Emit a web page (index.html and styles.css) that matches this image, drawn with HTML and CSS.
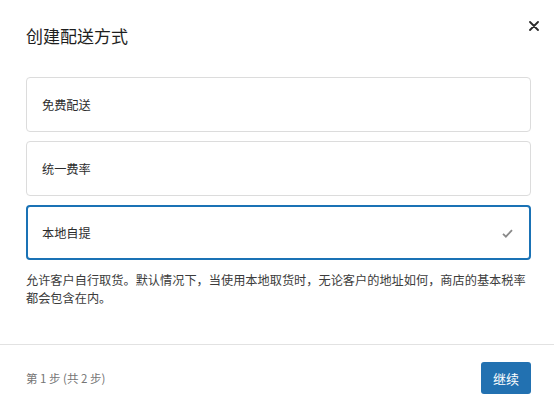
FILE: index.html
```html
<!DOCTYPE html>
<html lang="zh-CN">
<head>
<meta charset="utf-8">
<title>创建配送方式</title>
<link rel="stylesheet" href="styles.css">
</head>
<body>
<div class="modal">
  <div class="modal-header">
    <h1 class="modal-title">创建配送方式</h1>
    <button class="close-btn" aria-label="关闭">
      <svg width="10" height="10" viewBox="0 0 10 10"><path d="M1 1 L9 9 M9 1 L1 9" stroke="#2a2a2a" stroke-width="1.8" stroke-linecap="round"/></svg>
    </button>
  </div>
  <div class="modal-body">
    <div class="options">
      <div class="option"><span>免费配送</span></div>
      <div class="option"><span>统一费率</span></div>
      <div class="option selected"><span>本地自提</span>
        <svg class="check" width="11" height="9" viewBox="0 0 11 9"><path d="M1 4.8 L3.9 7.6 L10 1.2" fill="none" stroke="#8a8a8a" stroke-width="1.8"/></svg>
      </div>
    </div>
    <p class="desc">允许客户自行取货。默认情况下，当使用本地取货时，无论客户的地址如何，商店的基本税率都会包含在内。</p>
  </div>
  <div class="modal-footer">
    <span class="step">第 1 步 (共 2 步)</span>
    <button class="btn-primary">继续</button>
  </div>
</div>
</body>
</html>
```

FILE: styles.css
```css
* { box-sizing: border-box; }
html, body {
  margin: 0;
  padding: 0;
  background: #fff;
}
body {
  font-family: "Noto Sans CJK SC", "Noto Sans", "Liberation Sans", sans-serif;
  color: #1e1e1e;
  width: 554px;
  height: 411px;
  overflow: hidden;
}
.modal {
  display: flex;
  flex-direction: column;
  height: 411px;
}
.modal-header {
  display: flex;
  justify-content: space-between;
  align-items: flex-start;
  padding: 23px 15px 0 26px;
  height: 77px;
}
.modal-title {
  margin: 0;
  font-size: 17px;
  font-weight: 400;
  line-height: 26px;
  color: #1e1e1e;
}
.close-btn {
  border: 0;
  background: none;
  padding: 0;
  margin-top: -2px;
  width: 10px;
  height: 10px;
  cursor: pointer;
  display: flex;
}
.modal-body {
  padding: 0 23px 0 26px;
  height: 267px;
}
.options {
  display: flex;
  flex-direction: column;
  gap: 9px;
}
.option {
  height: 55px;
  border: 1px solid #dcdcdc;
  border-radius: 4px;
  display: flex;
  align-items: center;
  justify-content: space-between;
  padding: 0 17px 0 15px;
  font-size: 12.2px;
  color: #2c2c2c;
}
.option.selected {
  border: 2px solid #1a72b5;
  padding: 0 16px 0 14px;
}
.check { margin-top: 1px; }
.desc {
  margin: 11px 0 0;
  font-size: 12.2px;
  line-height: 18px;
  color: #3c3c3c;
}
.modal-footer {
  border-top: 1px solid #e2e2e2;
  display: flex;
  align-items: center;
  justify-content: space-between;
  padding: 0 23px 0 26px;
  height: 67px;
}
.step {
  font-size: 11.5px;
  color: #757575;
}
.btn-primary {
  background: #2271b1;
  color: #fff;
  border: 0;
  border-radius: 3px;
  width: 50px;
  height: 32px;
  font-family: inherit;
  font-size: 13px;
  cursor: pointer;
}
```
